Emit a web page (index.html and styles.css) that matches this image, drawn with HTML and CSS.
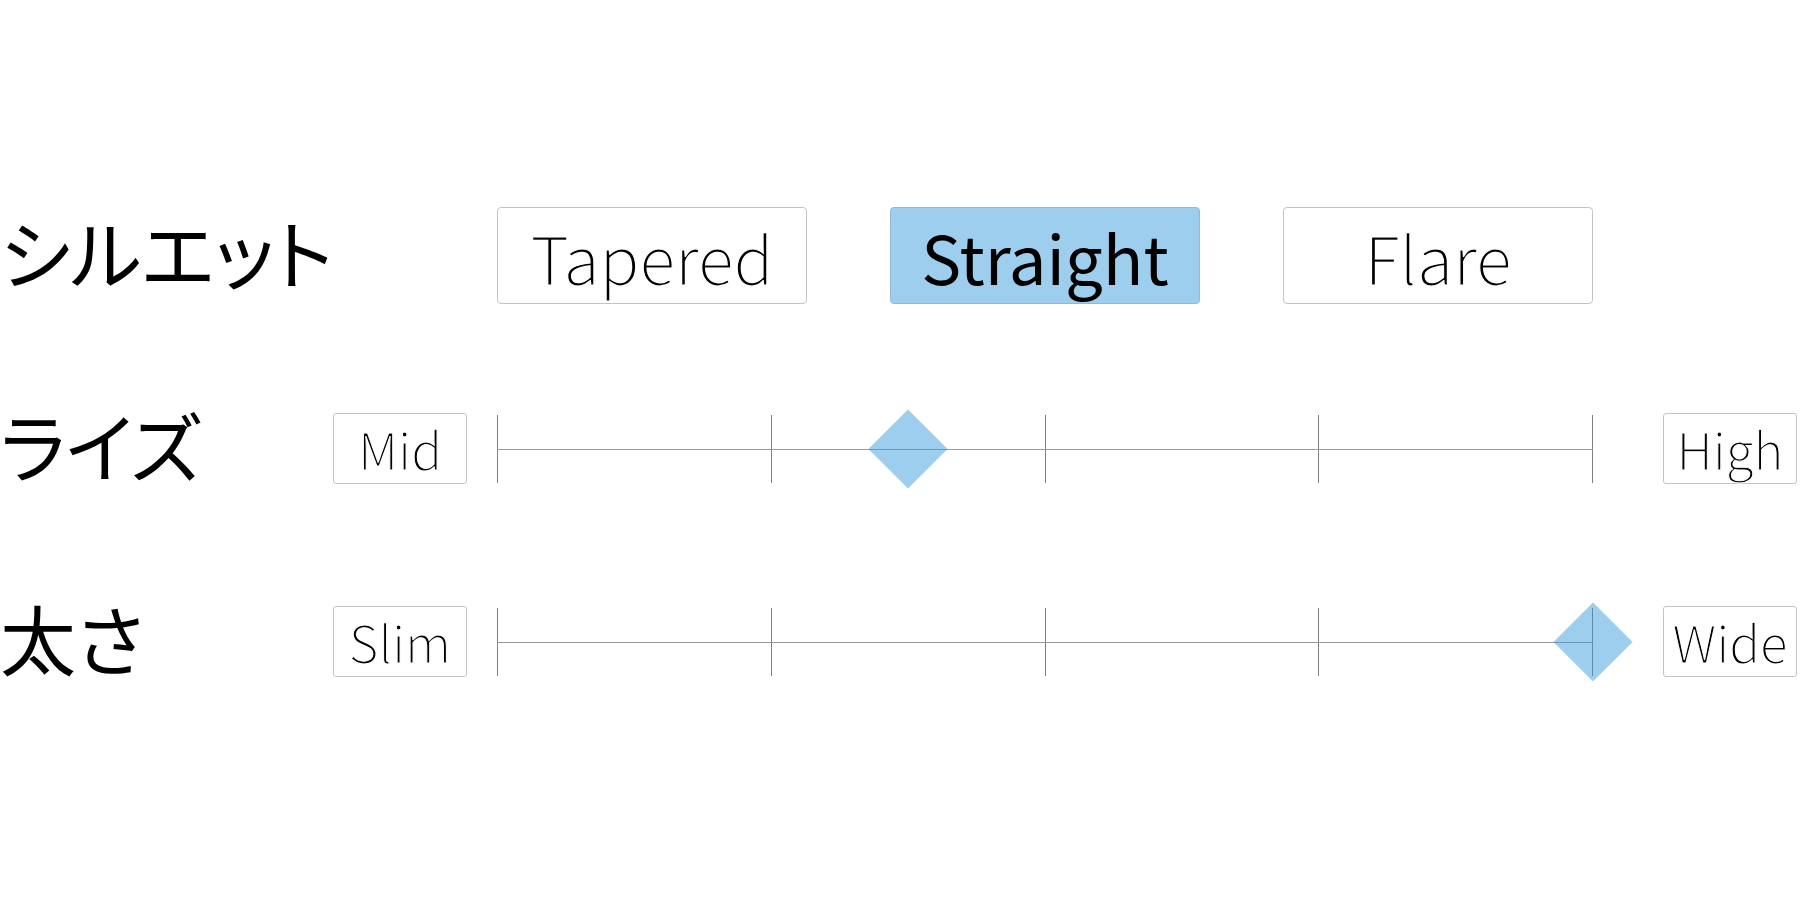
FILE: index.html
```html
<!DOCTYPE html>
<html lang="ja">
<head>
<meta charset="utf-8">
<title>Fit</title>
<link rel="stylesheet" href="styles.css">
</head>
<body>
<div class="panel">
  <div class="row">
    <div class="label">シルエット</div>
    <div class="options">
      <div class="option">Tapered</div>
      <div class="option selected">Straight</div>
      <div class="option">Flare</div>
    </div>
  </div>
  <div class="row">
    <div class="label">ライズ</div>
    <div class="end">Mid</div>
    <div class="track">
      <div class="tick"></div><div class="tick"></div><div class="tick"></div><div class="tick"></div><div class="tick"></div>
      <div class="thumb" style="left: 37.5%"></div>
    </div>
    <div class="end">High</div>
  </div>
  <div class="row">
    <div class="label">太さ</div>
    <div class="end">Slim</div>
    <div class="track">
      <div class="tick"></div><div class="tick"></div><div class="tick"></div><div class="tick"></div><div class="tick"></div>
      <div class="thumb" style="left: 100%"></div>
    </div>
    <div class="end">Wide</div>
  </div>
</div>
</body>
</html>
```

FILE: styles.css
```css
html, body {
  margin: 0;
  padding: 0;
  background: #ffffff;
}
body {
  font-family: "Noto Sans CJK JP", "Noto Sans", sans-serif;
  color: #000;
}
.panel {
  padding-top: 159px;
  display: flex;
  flex-direction: column;
}
.row {
  height: 193px;
  display: flex;
  align-items: center;
}
.label {
  box-sizing: border-box;
  width: 333px;
  flex: none;
  padding-bottom: 10px;
  font-size: 76px;
  font-weight: 400;
  line-height: 1;
  font-feature-settings: "palt";
}
.options {
  margin-left: 164px;
  display: grid;
  grid-template-columns: repeat(3, 310px);
  column-gap: 83px;
}
.option {
  box-sizing: border-box;
  height: 97px;
  border: 1px solid #c4c4c4;
  border-radius: 4px;
  display: flex;
  align-items: center;
  justify-content: center;
  font-family: "Noto Sans CJK JP", sans-serif;
  font-size: 66px;
  font-weight: 300;
  line-height: 1;
  -webkit-text-stroke: 1.2px #ffffff;
}
.option.selected {
  background: rgba(52, 152, 219, 0.48);
  border-color: #8fb9d8;
  font-size: 67px;
  font-weight: 400;
  -webkit-text-stroke: 0;
}
.end {
  box-sizing: border-box;
  width: 134px;
  height: 71px;
  flex: none;
  border: 1px solid #c4c4c4;
  border-radius: 3px;
  display: flex;
  align-items: center;
  justify-content: center;
  font-family: "Noto Sans CJK JP", sans-serif;
  font-size: 51px;
  font-weight: 300;
  line-height: 1;
  -webkit-text-stroke: 1px #ffffff;
}
.track {
  position: relative;
  width: 1096px;
  height: 68px;
  flex: none;
  margin: 0 70px 0 30px;
  display: flex;
  justify-content: space-between;
}
.track::before {
  content: "";
  position: absolute;
  left: 0;
  right: 0;
  top: 34px;
  height: 1px;
  background: #999;
}
.tick {
  width: 1px;
  height: 68px;
  background: #808080;
}
.thumb {
  position: absolute;
  top: 34px;
  width: 56px;
  height: 56px;
  margin-left: -28px;
  margin-top: -28px;
  background: rgba(52, 152, 219, 0.48);
  transform: rotate(45deg);
}
```
